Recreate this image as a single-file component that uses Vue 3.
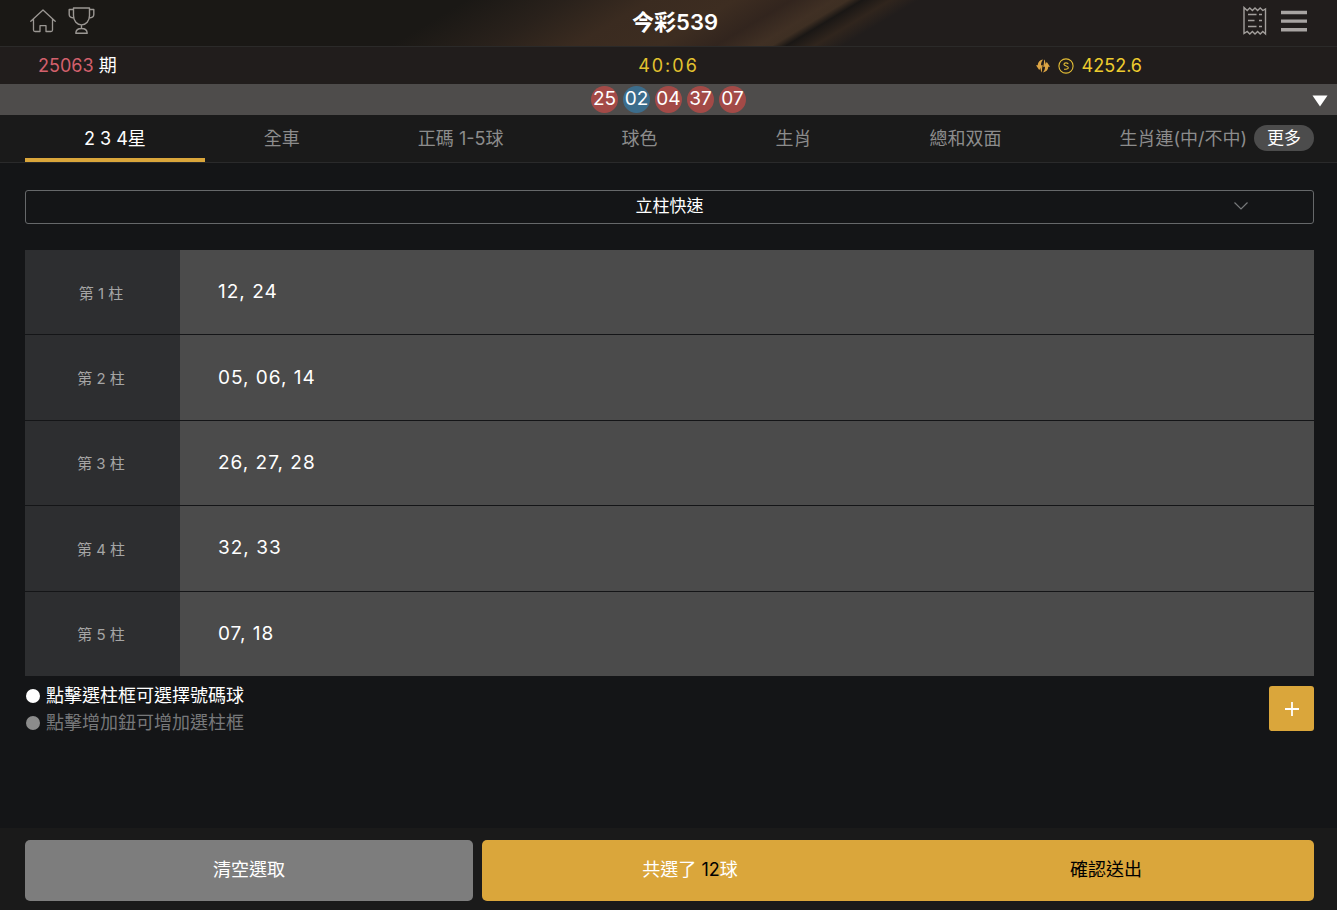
<script setup>
import { ref } from 'vue'

const balls = [
  { n: '25', color: 'red' },
  { n: '02', color: 'blue' },
  { n: '04', color: 'red' },
  { n: '37', color: 'red' },
  { n: '07', color: 'red' },
]
const tabs = ['2 3 4星', '全車', '正碼 1-5球', '球色', '生肖', '總和双面', '生肖連(中/不中)']
const activeTab = ref(0)
const mode = ref('立柱快速')
const columns = ref([
  ['12', '24'],
  ['05', '06', '14'],
  ['26', '27', '28'],
  ['32', '33'],
  ['07', '18'],
])
</script>

<template>
  <div class="page">
    <header class="topbar">
      <div class="group left">
        <button class="icon-btn" aria-label="首頁">
          <svg width="26" height="26" viewBox="0 0 26 26" fill="none" stroke="#9b9793" stroke-width="1.3" stroke-linejoin="round" stroke-linecap="round">
            <path d="M.8 13.300 13 2 25.200 13.300M3.500 11V22Q3.500 23.500 5 23.500H10V17.700H16V23.500H21Q22.500 23.500 22.500 22V11" />
          </svg>
        </button>
        <button class="icon-btn" aria-label="獎盃">
          <svg width="27" height="28" viewBox="0 0 27 28" fill="none" stroke="#9b9793" stroke-width="1.400" stroke-linejoin="round">
            <path d="M5.500 1H21.500V8.500C21.500 14 18 17.900 13.500 17.900S5.500 14 5.500 8.500ZM5.500 2.500H1.200V7.500Q1.200 10.800 6 11M21.500 2.500H25.800V7.500Q25.800 10.800 21 11M13.500 17.900V21.500M7.800 26.300Q8 21.500 13.500 21.500T19.200 26.300Z" />
          </svg>
        </button>
      </div>
      <h1>今彩539</h1>
      <div class="group right">
        <button class="icon-btn" aria-label="注單">
          <svg width="24" height="30" viewBox="0 0 24 30" fill="none" stroke="#a39f9c" stroke-width="1.400">
            <path d="M1 1.500 4.200 4.500 6.800 2 9.400 4.500 12 2 14.600 4.500 17.200 2 19.800 4.500 22.500 3V28L19.800 25.500 17.200 28 14.600 25.500 12 28 9.400 25.500 6.800 28 4.200 25.500 1 27.500Z" />
            <path d="M5 8.500H13.500M16 8.500H19M5 14.500H11.500M16 14.500H19M5 20.500H13.500M16 20.500H19" />
          </svg>
        </button>
        <button class="icon-btn" aria-label="選單">
          <svg width="26" height="22" viewBox="0 0 26 22" fill="#a8a4a2">
            <path d="M0 .8H26V4.200H0ZM0 9.400H26V12.800H0ZM0 18H26V21.400H0Z" />
          </svg>
        </button>
      </div>
    </header>

    <section class="status">
      <div class="period"><span>25063</span> 期</div>
      <time class="timer">40:06</time>
      <div class="balance">
        <svg width="14" height="14" viewBox="0 0 14 14" fill="#dca444">
          <path d="M7.200.6C4 1 1.900 3 1.700 6.300H0L3.200 11 6.600 6.300H5C5 4 5.700 2 7.200.6ZM7 5.500 4.600 9.200C4.500 10.800 4.900 12.400 6 13.400 5.900 10.500 6.200 7.800 7 5.500Z" />
          <path d="M6.800 13.400C10 13 12.100 11 12.300 7.700H14L10.800 3 7.400 7.700H9C9 10 8.300 12 6.800 13.400ZM7 8.500 9.400 4.800C9.500 3.200 9.100 1.600 8 .6 8.100 3.500 7.800 6.200 7 8.500Z" />
        </svg>
        <svg width="16" height="16" viewBox="0 0 16 16" fill="none" stroke="#e2bc35" stroke-width="1.100">
          <circle cx="8" cy="8" r="7.100" />
          <path d="M10.200 6.200Q10 4.900 8 4.900 6 4.900 5.900 6.300C5.900 8.400 10.300 7.600 10.300 9.700 10.200 11.200 8 11.200 6 11.200 5.700 9.800M8 3V13" />
        </svg>
        <span>4252.6</span>
      </div>
    </section>

    <section class="draw">
      <span v-for="b in balls" :key="b.n" class="ball" :class="b.color">{{ b.n }}</span>
      <button class="expand" aria-label="展開">
        <svg width="16" height="12" viewBox="0 0 16 12" fill="#fff"><path d="M.5.500H15.500L8 11.500Z" /></svg>
      </button>
    </section>

    <nav class="tabs">
      <div class="strip">
        <button
          v-for="(t, i) in tabs"
          :key="t"
          class="tab"
          :class="{ active: i === activeTab }"
          @click="activeTab = i"
        >{{ t }}</button>
      </div>
      <button class="more">更多</button>
    </nav>

    <main>
      <div class="select-wrap">
        <select v-model="mode" aria-label="玩法">
          <option>立柱快速</option>
        </select>
        <svg class="chevron" width="16" height="10" viewBox="0 0 16 10" fill="none" stroke="#77797b" stroke-width="1.200"><path d="M1.500 1.500 8 8 14.500 1.500" /></svg>
      </div>

      <table>
        <tbody>
          <tr v-for="(c, i) in columns" :key="i">
            <th scope="row">第 {{ i + 1 }} 柱</th>
            <td><button>{{ c.join(', ') }}</button></td>
          </tr>
        </tbody>
      </table>

      <div class="below">
        <ul class="hints">
          <li>點擊選柱框可選擇號碼球</li>
          <li class="dim">點擊增加鈕可增加選柱框</li>
        </ul>
        <button class="add" aria-label="增加選柱框" @click="columns.push([])">
          <svg width="14" height="14" viewBox="0 0 14 14" stroke="#fff" stroke-width="1.800"><path d="M7 0V14M0 7H14" /></svg>
        </button>
      </div>
    </main>

    <footer>
      <button class="clear">清空選取</button>
      <button class="submit">
        <span class="count">共選了 <b>12</b>球</span>
        <span>確認送出</span>
      </button>
    </footer>
  </div>
</template>

<style>
body {
  background: #141517;
}
</style>

<style scoped>
.page {
  min-height: 100vh;
  display: flex;
  flex-direction: column;
  background: #141517;
  color: #fff;
  font-family: Inter, "Noto Sans CJK TC", sans-serif;
  font-size: 18px;
  line-height: 24px;
}
* {
  box-sizing: border-box;
}
button,
select {
  font: inherit;
  color: inherit;
  background: none;
  border: 0;
  padding: 0;
  margin: 0;
  cursor: pointer;
}
svg {
  display: block;
}
.topbar {
  display: flex;
  align-items: center;
  height: 47px;
  padding-bottom: 5px;
  border-bottom: 1px solid #2b2a29;
  background: linear-gradient(149deg, #1a1815 0%, #1a1815 33%, #29211b 40%, #3a2b20 46%, #3d2d21 52%, #32251e 56%, #403024 59%, #3e2f23 60%, #1a1715 61%, #30251d 63%, #211d1c 65%, #211d1c 100%);
}
.group {
  display: flex;
  align-items: center;
}
.left {
  gap: 12px;
  padding: 0 12px 0 30px;
}
.right {
  gap: 14px;
  padding-right: 30px;
}
h1 {
  flex: 1;
  margin: 0;
  padding-top: 2px;
  text-align: center;
  font-size: 22px;
  font-weight: 600;
}
.status {
  display: grid;
  grid-template-columns: repeat(3, 1fr);
  align-items: center;
  height: 37px;
  padding: 0 38px;
  background: #211d1c;
}
.period span {
  color: #d3606c;
}
.timer {
  text-align: center;
  color: #e3c22f;
  letter-spacing: 2px;
}
.balance {
  display: flex;
  align-items: center;
  justify-content: center;
  gap: 8px;
  color: #edcb2e;
}
.draw {
  position: relative;
  display: flex;
  align-items: center;
  justify-content: center;
  gap: 5px;
  height: 31px;
  background: #4e4c4b;
}
.ball {
  width: 27px;
  height: 27px;
  border-radius: 50%;
  text-align: center;
  font-size: 19px;
  line-height: 26px;
}
.red {
  background: #a34a47;
}
.blue {
  background: #3c6d8c;
}
.expand {
  position: absolute;
  right: 9px;
  top: 11px;
}
.tabs {
  display: flex;
  align-items: center;
  height: 48px;
  padding: 0 23px 0 25px;
  border-bottom: 1px solid #2a2a2b;
  background: #1a1a1a;
}
.strip {
  flex: 1;
  min-width: 0;
  height: 47px;
  display: flex;
  overflow: hidden;
}
.tab {
  flex: none;
  padding: 4px 59px 0;
  border-bottom: 4px solid transparent;
  color: #8c8c8c;
  white-space: nowrap;
}
.tab.active {
  color: #fff;
  border-color: #daa63b;
}
.more {
  width: 60px;
  height: 26px;
  margin-bottom: 2px;
  border-radius: 13px;
  background: #4c4c4c;
  font-size: 17px;
}
main {
  flex: 1;
  padding: 27px 23px 0 25px;
}
.select-wrap {
  position: relative;
}
select {
  display: block;
  width: 100%;
  height: 34px;
  padding-bottom: 2px;
  border: 1px solid #66686a;
  border-radius: 3px;
  appearance: none;
  text-align: center;
  text-align-last: center;
  font-size: 17px;
}
.chevron {
  position: absolute;
  right: 65px;
  top: 11px;
  pointer-events: none;
}
table {
  width: 100%;
  height: 426px;
  margin-top: 26px;
  border-collapse: collapse;
}
tr + tr {
  border-top: 1px solid #141517;
}
th {
  width: 155px;
  padding: 3px 3px 0 0;
  background: #2d2e30;
  color: #a5a5a5;
  font-size: 15px;
  font-weight: 400;
}
td {
  padding: 0;
  background: #4b4b4b;
}
td button {
  display: block;
  width: 100%;
  height: 80px;
  padding: 0 38px;
  text-align: left;
  font-size: 19px;
  letter-spacing: 1px;
}
.below {
  display: flex;
  justify-content: space-between;
  align-items: flex-start;
  padding-top: 6px;
}
.hints {
  margin: 0;
  padding: 0 0 0 1px;
  list-style: none;
  line-height: 27px;
}
.hints li {
  display: flex;
  align-items: center;
  gap: 6px;
}
.hints li::before {
  content: "";
  width: 14px;
  height: 14px;
  border-radius: 50%;
  background: #fff;
}
.hints .dim {
  color: #77787a;
}
.hints .dim::before {
  background: #8c8c8c;
}
.add {
  display: grid;
  place-items: center;
  width: 45px;
  height: 45px;
  margin-top: 4px;
  border-radius: 3px;
  background: #daa63b;
}
footer {
  display: flex;
  gap: 9px;
  padding: 12px 23px 9px 25px;
  background: #1a1a1a;
}
footer button {
  height: 61px;
  padding-bottom: 2px;
  border-radius: 5px;
}
.clear {
  flex: 35;
  background: #7d7d7d;
}
.submit {
  flex: 65;
  display: grid;
  grid-template-columns: 1fr 1fr;
  align-items: center;
  background: #daa63b;
  color: #000;
}
.count {
  color: #fff;
}
.count b {
  color: #000;
  font-weight: 400;
}
</style>
